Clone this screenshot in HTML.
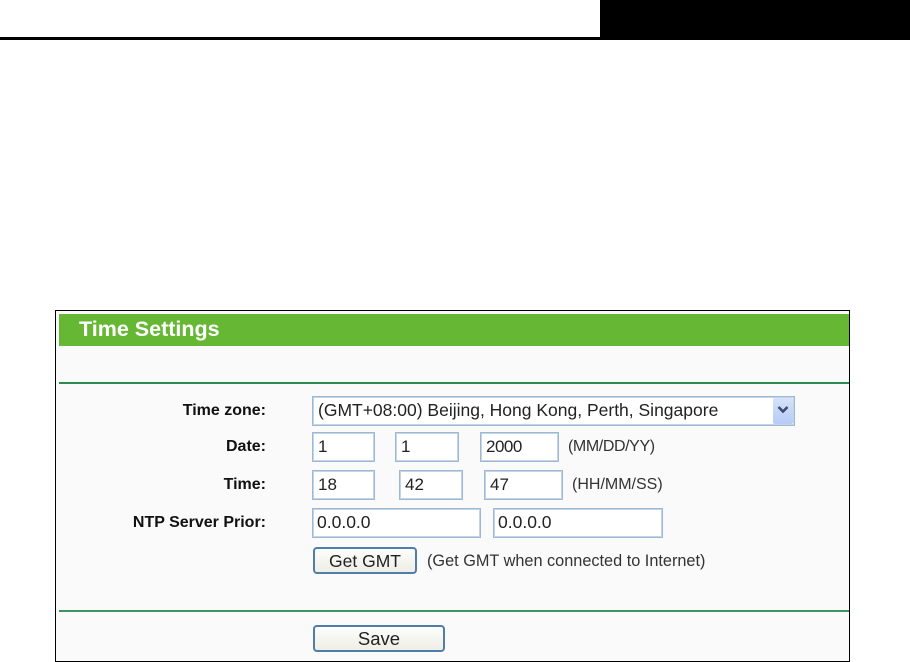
<!DOCTYPE html>
<html><head><meta charset="utf-8"><style>
html,body{margin:0;padding:0;background:#fff}
#p{position:relative;width:910px;height:662px;overflow:hidden;background:#fff;font-family:"Liberation Sans",sans-serif;color:#111}
#p div{position:absolute;box-sizing:border-box;white-space:nowrap}
#p span{filter:blur(.3px)}
.l{font-weight:bold;font-size:16px;line-height:18px;text-align:right;width:200px;left:66px;color:#111}
.i{border:1px solid #9cb8d4;box-shadow:inset 0 0 0 1px #c4d5e5;background:#fff;font-size:17px;line-height:27px;padding-left:5px;color:#222}
.t{font-size:16px;line-height:18px;color:#333}
.b{border:2px solid #4f7fa8;border-radius:4px;background:linear-gradient(#fdfdfb,#eeeee6);font-size:17.5px;text-align:center;color:#222}
</style></head><body><div id="p">
<div style="left:0;top:37px;width:910px;height:3px;background:#000"></div>
<div style="left:600px;top:0;width:310px;height:40px;background:#000"></div>

<div style="left:55px;top:310px;width:795px;height:352px;border:1px solid #000;background:#fafafa"></div>
<div style="left:59px;top:314px;width:790px;height:32px;background:#66b834"></div>
<div style="left:79px;top:315px;font-size:21.5px;font-weight:bold;line-height:28px;color:#fff"><span>Time Settings</span></div>
<div style="left:59px;top:382px;width:790px;height:2px;background:#2e8a50"></div>
<div style="left:59px;top:610px;width:790px;height:2px;background:#3f9465"></div>

<div class="l" style="top:402px"><span>Time zone:</span></div>
<div class="l" style="top:438px"><span>Date:</span></div>
<div class="l" style="top:476px"><span>Time:</span></div>
<div class="l" style="top:514px"><span>NTP Server Prior:</span></div>

<div class="i" style="left:312px;top:396px;width:483px;height:30px;font-size:17.5px"><span>(GMT+08:00) Beijing, Hong Kong, Perth, Singapore</span></div>
<div style="left:773px;top:398px;width:20px;height:26px;background:linear-gradient(#d6e2fa,#b6cbf6);border-radius:2px"></div>
<svg style="position:absolute;left:777px;top:405px" width="12" height="10" viewBox="0 0 12 10"><path d="M1.5 2 L6 6.5 L10.5 2" fill="none" stroke="#3a4c78" stroke-width="2.6"/></svg>

<div class="i" style="left:312px;top:432px;width:63px;height:30px"><span>1</span></div>
<div class="i" style="left:395px;top:432px;width:64px;height:30px"><span>1</span></div>
<div class="i" style="left:480px;top:432px;width:79px;height:30px;letter-spacing:-.5px"><span>2000</span></div>
<div class="t" style="left:568px;top:438px;letter-spacing:-.4px"><span>(MM/DD/YY)</span></div>

<div class="i" style="left:312px;top:470px;width:63px;height:30px;line-height:28px"><span>18</span></div>
<div class="i" style="left:399px;top:470px;width:64px;height:30px;line-height:28px"><span>42</span></div>
<div class="i" style="left:484px;top:470px;width:79px;height:30px;line-height:28px"><span>47</span></div>
<div class="t" style="left:572px;top:476px"><span>(HH/MM/SS)</span></div>

<div class="i" style="left:312px;top:508px;width:169px;height:30px;font-size:17.5px;padding-left:4px"><span>0.0.0.0</span></div>
<div class="i" style="left:493px;top:508px;width:170px;height:30px;font-size:17.5px;padding-left:4px"><span>0.0.0.0</span></div>

<div class="b" style="left:313px;top:547px;width:104px;height:27px;line-height:24px"><span>Get GMT</span></div>
<div class="t" style="left:427px;top:552px;font-size:16.3px"><span>(Get GMT when connected to Internet)</span></div>
<div class="b" style="left:313px;top:625px;width:132px;height:27px;line-height:23px;font-size:18.5px"><span>Save</span></div>
</div></body></html>
